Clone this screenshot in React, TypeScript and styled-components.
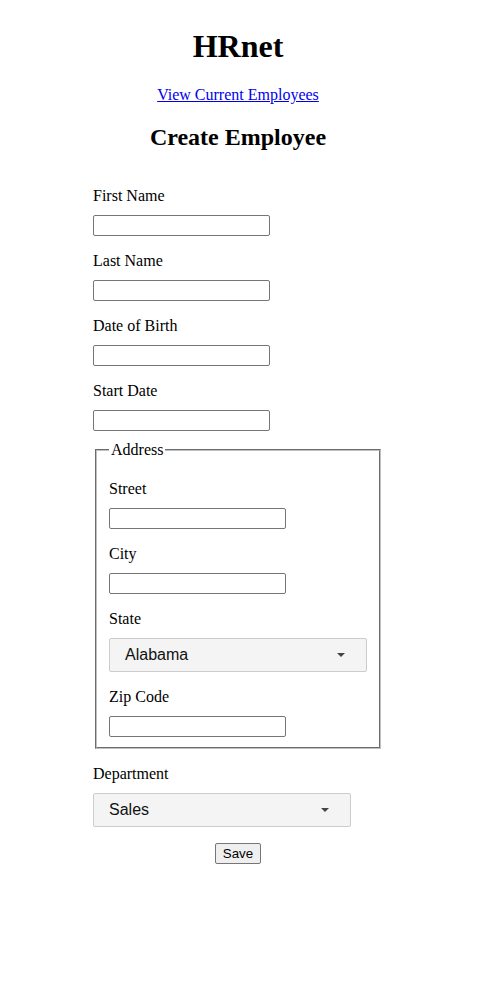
import React from "react";
import styled, { createGlobalStyle } from "styled-components";

const GlobalStyle = createGlobalStyle`
  body {
    margin: 8px;
    font-family: "Liberation Serif", "Times New Roman", serif;
    font-size: 16px;
    color: #000;
    background: #fff;
  }
`;

const Container = styled.div`
  width: 460px;
  display: flex;
  flex-direction: column;
  align-items: center;
`;

const Title = styled.h1`
  font-size: 32px;
  font-weight: bold;
  margin: 19.5px 0 21.44px;
`;

const NavLink = styled.a`
  color: #0000ee;
  text-decoration: underline;
  cursor: pointer;
`;

const Subtitle = styled.h2`
  font-size: 24px;
  font-weight: bold;
  margin: 19.92px 0;
`;

const Form = styled.form`
  display: flex;
  flex-direction: column;
  align-items: flex-start;
`;

const Label = styled.label`
  display: block;
  margin: 16px 0 10px;
`;

const TextInput = styled.input`
  box-sizing: border-box;
  width: 177px;
  height: 21px;
  border: 1px solid #767676;
  border-radius: 2px;
  padding: 1px 2px;
  font-family: "Liberation Sans", Arial, sans-serif;
  font-size: 13.33px;
  background: #fff;
`;

const Fieldset = styled.fieldset`
  margin: 10px 2px 0;
  padding: 5.6px 12px 10px;
  border: 2px groove #c0c0c0;
  display: flex;
  flex-direction: column;
  align-items: flex-start;
`;

const Legend = styled.legend`
  padding: 0 2px;
  font-size: 16px;
`;

const Dropdown = styled.div`
  box-sizing: border-box;
  width: 258px;
  height: 34px;
  border: 1px solid #cccccc;
  border-radius: 2px;
  background: #f4f4f4;
  display: flex;
  align-items: center;
  justify-content: space-between;
  padding: 0 21px 0 15px;
  font-family: "Liberation Sans", Arial, sans-serif;
  font-size: 16px;
  color: #111;
  cursor: pointer;
`;

const Caret = styled.span`
  width: 0;
  height: 0;
  border-style: solid;
  border-width: 4px 4px 0;
  border-color: #444 transparent transparent;
`;

const SaveButton = styled.button`
  align-self: center;
  margin-top: 16px;
  box-sizing: border-box;
  height: 21px;
  padding: 1px 7px;
  border: 1px solid #767676;
  border-radius: 2px;
  background: #efefef;
  font-family: "Liberation Sans", Arial, sans-serif;
  font-size: 13.33px;
  color: #000;
`;

const fields = ["First Name", "Last Name", "Date of Birth", "Start Date"];

export default function App() {
  return (
    <>
      <GlobalStyle />
      <Container>
        <Title>HRnet</Title>
        <div>
          <NavLink href="#">View Current Employees</NavLink>
        </div>
        <Subtitle>Create Employee</Subtitle>
        <Form onSubmit={(e) => e.preventDefault()}>
          {fields.map((f) => (
            <React.Fragment key={f}>
              <Label>{f}</Label>
              <TextInput type="text" />
            </React.Fragment>
          ))}
          <Fieldset>
            <Legend>Address</Legend>
            <Label>Street</Label>
            <TextInput type="text" />
            <Label>City</Label>
            <TextInput type="text" />
            <Label>State</Label>
            <Dropdown>
              <span>Alabama</span>
              <Caret />
            </Dropdown>
            <Label>Zip Code</Label>
            <TextInput type="number" />
          </Fieldset>
          <Label>Department</Label>
          <Dropdown>
            <span>Sales</span>
            <Caret />
          </Dropdown>
          <SaveButton type="submit">Save</SaveButton>
        </Form>
      </Container>
    </>
  );
}
